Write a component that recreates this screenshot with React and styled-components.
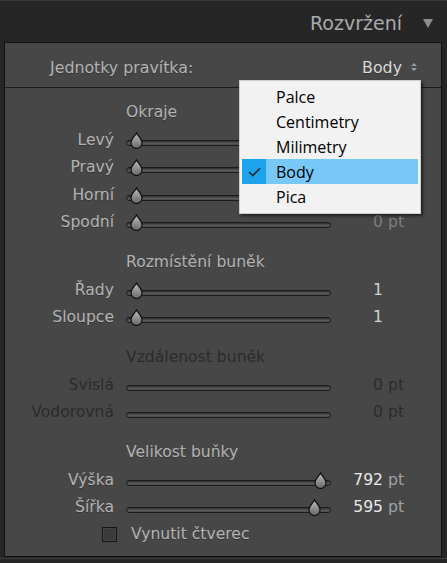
import { useId } from "react";
import styled, { createGlobalStyle } from "styled-components";

const GlobalStyle = createGlobalStyle`
  *, *::before, *::after { box-sizing: border-box; }
  html, body { margin: 0; padding: 0; background: #262626; }
  body { font-family: "DejaVu Sans", Verdana, sans-serif; }
`;

const Page = styled.div`
  width: 447px;
  height: 563px;
  overflow: hidden;
  background: #262626;
  border-top: 1px solid #383838;
`;

const Header = styled.div`
  height: 41px;
  display: flex;
  align-items: center;
  justify-content: flex-end;
  gap: 21px;
  padding: 2px 14px 0 0;
`;

const HeaderTitle = styled.span`
  font-size: 19px;
  color: #a9a9a9;
`;

const Panel = styled.div`
  position: relative;
  margin: 0 5px 0 4px;
  height: 515px;
  border: 1px solid #111;
  background: #474747;
`;

const UnitsRow = styled.div`
  height: 45px;
  display: flex;
  align-items: center;
  justify-content: space-between;
  padding: 4px 24px 0 45px;
  border-bottom: 1px solid #1c1c1c;
  font-size: 15.8px;
  color: #b3b3b3;
  text-shadow: 0 1px 0 rgba(0, 0, 0, 0.25);
`;

const UnitsValue = styled.span`
  display: flex;
  align-items: center;
  gap: 9px;
  color: #dadada;
`;

const Body = styled.div`
  display: flex;
  flex-direction: column;
  gap: 12px;
  padding-top: 10px;
`;

const SectionTitle = styled.div`
  height: 28px;
  display: flex;
  align-items: center;
  padding-left: 121px;
  font-size: 15.6px;
  color: ${(p) => (p.$disabled ? "#2b2b2b" : "#b3b3b3")};
  text-shadow: ${(p) => (p.$disabled ? "none" : "0 1px 0 rgba(0, 0, 0, 0.25)")};
`;

const Row = styled.div`
  display: grid;
  grid-template-columns: 121px 205px 52px 1fr;
  align-items: center;
  height: 27.5px;
  font-size: 15.6px;
`;

const Label = styled.span`
  text-align: right;
  padding-right: 12px;
  color: ${(p) => (p.$disabled ? "#2b2b2b" : "#b3b3b3")};
  text-shadow: ${(p) => (p.$disabled ? "none" : "0 1px 0 rgba(0, 0, 0, 0.25)")};
`;

const SliderCell = styled.div`
  position: relative;
  height: 100%;
  display: flex;
  align-items: center;
  padding-top: 6px;
`;

const Track = styled.div`
  width: 100%;
  height: 6px;
  border: 1px solid #1b1b1b;
  border-radius: 3px;
  background: linear-gradient(#2e2e2e, #5a5a5a 60%, #4a4a4a);
`;

const KnobSvg = styled.svg`
  position: absolute;
  top: calc(50% + 3px - 11px);
  width: 15px;
  height: 17px;
`;

const Number = styled.span`
  text-align: right;
  color: ${(p) => p.$color};
`;

const Unit = styled.span`
  padding-left: 5px;
  color: ${(p) => p.$color};
`;

const CheckRow = styled.div`
  height: 26px;
  display: flex;
  align-items: center;
  gap: 14px;
  padding-left: 97px;
  font-size: 15.6px;
  color: #b3b3b3;
  text-shadow: 0 1px 0 rgba(0, 0, 0, 0.25);
`;

const CheckBox = styled.span`
  width: 15px;
  height: 15px;
  border: 1px solid #151515;
  background: #3b3b3b;
  box-shadow: inset 0 0 0 1px #444;
`;

const Menu = styled.div`
  position: absolute;
  top: 37px;
  left: 234px;
  width: 182px;
  padding: 3px 2px 4px;
  background: #f2f2f2;
  border: 1px solid #cdcdcd;
  box-shadow: 2px 2px 3px rgba(0, 0, 0, 0.55);
  font-family: "Open Sans", "Noto Sans", sans-serif;
  font-size: 16px;
  color: #000;
`;

const MenuItem = styled.div`
  height: 25px;
  display: flex;
  align-items: center;
  background: ${(p) => (p.$selected ? "#77c8f7" : "transparent")};
`;

const CheckCell = styled.span`
  width: 24px;
  height: 100%;
  display: flex;
  align-items: center;
  justify-content: center;
  background: ${(p) => (p.$selected ? "#1ba3ec" : "transparent")};
`;

const ItemText = styled.span`
  padding-left: 10px;
`;

const Footer = styled.div`
  margin-top: 1px;
  height: 1px;
  background: #3a3a3a;
`;

function Knob({ pos }) {
  const id = useId();
  // track 205px, knob 15px, 3px inset at each end
  const left = 3 + pos * 184;
  return (
    <KnobSvg viewBox="0 0 15 17" style={{ left }}>
      <defs>
        <linearGradient id={id} x1="0" y1="0" x2="0" y2="1">
          <stop offset="0" stopColor="#bdbdbd" />
          <stop offset="1" stopColor="#676767" />
        </linearGradient>
      </defs>
      <path
        d="M7.5 1 C8.6 3.6 13 6.8 13 11 A5.5 5.5 0 0 1 2 11 C2 6.8 6.4 3.6 7.5 1 Z"
        fill={`url(#${id})`}
        stroke="#0d0d0d"
        strokeWidth="1.2"
      />
    </KnobSvg>
  );
}

function SliderRow({ label, pos, num, unit, disabled, numColor }) {
  return (
    <Row>
      <Label $disabled={disabled}>{label}</Label>
      <SliderCell>
        <Track />
        {!disabled && <Knob pos={pos} />}
      </SliderCell>
      <Number $color={disabled ? "#2b2b2b" : numColor}>{num}</Number>
      {unit ? (
        <Unit $color={disabled ? "#2b2b2b" : numColor === "#e8e8e8" ? "#a2a2a2" : numColor}>{unit}</Unit>
      ) : (
        <span />
      )}
    </Row>
  );
}

const units = ["Palce", "Centimetry", "Milimetry", "Body", "Pica"];

const sections = [
  {
    title: "Okraje",
    rows: [
      { label: "Levý", pos: 0 },
      { label: "Pravý", pos: 0 },
      { label: "Horní", pos: 0 },
      { label: "Spodní", pos: 0, num: "0", unit: "pt", numColor: "#7e7e7e" },
    ],
  },
  {
    title: "Rozmístění buněk",
    rows: [
      { label: "Řady", pos: 0, num: "1", numColor: "#d2d2d2" },
      { label: "Sloupce", pos: 0, num: "1", numColor: "#d2d2d2" },
    ],
  },
  {
    title: "Vzdálenost buněk",
    disabled: true,
    rows: [
      { label: "Svislá", num: "0", unit: "pt" },
      { label: "Vodorovná", num: "0", unit: "pt" },
    ],
  },
  {
    title: "Velikost buňky",
    rows: [
      { label: "Výška", pos: 1, num: "792", unit: "pt", numColor: "#e8e8e8" },
      { label: "Šířka", pos: 0.965, num: "595", unit: "pt", numColor: "#e8e8e8" },
    ],
    checkbox: "Vynutit čtverec",
  },
];

export default function App() {
  return (
    <Page>
      <GlobalStyle />
      <Header>
        <HeaderTitle>Rozvržení</HeaderTitle>
        <svg width="10" height="10" viewBox="0 0 10 10">
          <path d="M0 1 H10 L5 10 Z" fill="#8e8e8e" />
        </svg>
      </Header>
      <Panel>
        <UnitsRow>
          <span>Jednotky pravítka:</span>
          <UnitsValue>
            Body
            <svg width="6" height="10" viewBox="0 0 6 10">
              <path d="M0 4 L3 1 L6 4 Z M0 6 L3 9 L6 6 Z" fill="#9c9c9c" />
            </svg>
          </UnitsValue>
        </UnitsRow>
        <Body>
          {sections.map((s) => (
            <div key={s.title}>
              <SectionTitle $disabled={s.disabled}>{s.title}</SectionTitle>
              {s.rows.map((r) => (
                <SliderRow key={r.label} {...r} disabled={s.disabled} />
              ))}
              {s.checkbox && (
                <CheckRow>
                  <CheckBox />
                  {s.checkbox}
                </CheckRow>
              )}
            </div>
          ))}
        </Body>
        <Menu>
          {units.map((u) => (
            <MenuItem key={u} $selected={u === "Body"}>
              <CheckCell $selected={u === "Body"}>
                {u === "Body" && (
                  <svg width="13" height="10" viewBox="0 0 13 10">
                    <path d="M1 5 L4.8 8.6 L12 1.2" fill="none" stroke="#1e2a33" strokeWidth="1.6" />
                  </svg>
                )}
              </CheckCell>
              <ItemText>{u}</ItemText>
            </MenuItem>
          ))}
        </Menu>
      </Panel>
      <Footer />
    </Page>
  );
}
